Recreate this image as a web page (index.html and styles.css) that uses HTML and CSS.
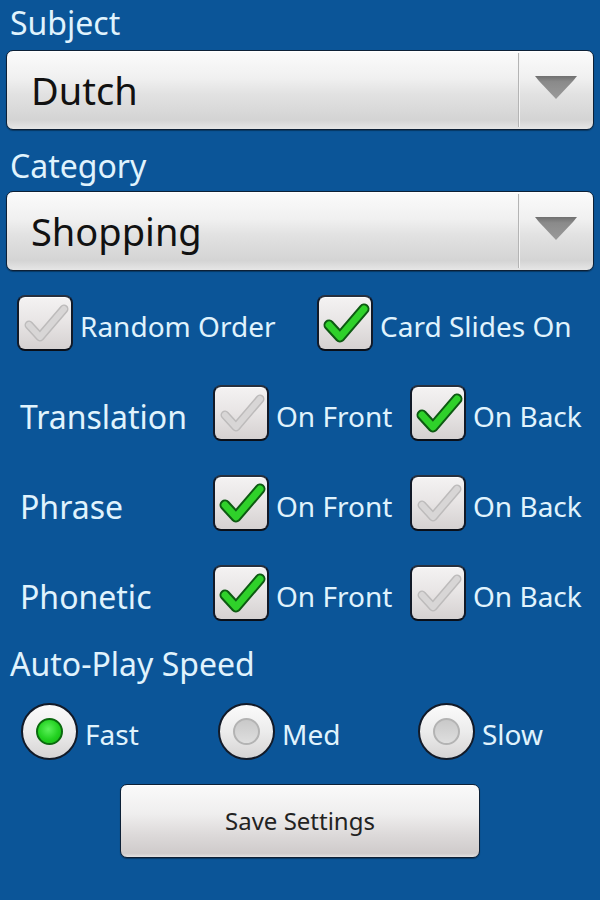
FILE: index.html
```html
<!DOCTYPE html>
<html lang="en">
<head>
<meta charset="utf-8">
<title>Settings</title>
<link rel="stylesheet" href="styles.css">
</head>
<body>
<div class="page">
  <div class="label label-first">Subject</div>
  <div class="spinner">
    <span class="spinner-text">Dutch</span>
    <span class="spinner-btn">
      <svg class="arrow" width="42" height="24" viewBox="0 0 42 24"><defs><linearGradient id="ag" x1="0" y1="0" x2="0" y2="1"><stop offset="0" stop-color="#6f6f6f"/><stop offset="0.25" stop-color="#8a8a8a"/><stop offset="1" stop-color="#9a9a9a"/></linearGradient></defs><polygon points="0,0 42,0 38,5 21,23 4,5" fill="url(#ag)"/></svg>
    </span>
  </div>
  <div class="label label-gap">Category</div>
  <div class="spinner">
    <span class="spinner-text">Shopping</span>
    <span class="spinner-btn">
      <svg class="arrow" width="42" height="24" viewBox="0 0 42 24"><polygon points="0,0 42,0 38,5 21,23 4,5" fill="url(#ag)"/></svg>
    </span>
  </div>

  <div class="row row-top">
    <div class="check-item">
      <span class="box"><svg width="56" height="56" viewBox="0 0 56 56"><path class="ck-off-o" d="M12 30 L23 42 L47 14"/><path class="ck-off" d="M12 30 L23 42 L47 14"/></svg></span>
      <span class="ctext">Random Order</span>
    </div>
    <div class="check-item">
      <span class="box"><svg width="56" height="56" viewBox="0 0 56 56"><path class="ck-on-o" d="M12 30 L23 42 L47 14"/><path class="ck-on" d="M12 30 L23 42 L47 14"/></svg></span>
      <span class="ctext">Card Slides On</span>
    </div>
  </div>

  <div class="row row-grid">
    <span class="rlabel">Translation</span>
    <div class="check-item">
      <span class="box"><svg width="56" height="56" viewBox="0 0 56 56"><path class="ck-off-o" d="M12 30 L23 42 L47 14"/><path class="ck-off" d="M12 30 L23 42 L47 14"/></svg></span>
      <span class="ctext">On Front</span>
    </div>
    <div class="check-item">
      <span class="box"><svg width="56" height="56" viewBox="0 0 56 56"><path class="ck-on-o" d="M12 30 L23 42 L47 14"/><path class="ck-on" d="M12 30 L23 42 L47 14"/></svg></span>
      <span class="ctext">On Back</span>
    </div>
  </div>

  <div class="row row-grid">
    <span class="rlabel">Phrase</span>
    <div class="check-item">
      <span class="box"><svg width="56" height="56" viewBox="0 0 56 56"><path class="ck-on-o" d="M12 30 L23 42 L47 14"/><path class="ck-on" d="M12 30 L23 42 L47 14"/></svg></span>
      <span class="ctext">On Front</span>
    </div>
    <div class="check-item">
      <span class="box"><svg width="56" height="56" viewBox="0 0 56 56"><path class="ck-off-o" d="M12 30 L23 42 L47 14"/><path class="ck-off" d="M12 30 L23 42 L47 14"/></svg></span>
      <span class="ctext">On Back</span>
    </div>
  </div>

  <div class="row row-grid">
    <span class="rlabel">Phonetic</span>
    <div class="check-item">
      <span class="box"><svg width="56" height="56" viewBox="0 0 56 56"><path class="ck-on-o" d="M12 30 L23 42 L47 14"/><path class="ck-on" d="M12 30 L23 42 L47 14"/></svg></span>
      <span class="ctext">On Front</span>
    </div>
    <div class="check-item">
      <span class="box"><svg width="56" height="56" viewBox="0 0 56 56"><path class="ck-off-o" d="M12 30 L23 42 L47 14"/><path class="ck-off" d="M12 30 L23 42 L47 14"/></svg></span>
      <span class="ctext">On Back</span>
    </div>
  </div>

  <div class="label label-speed">Auto-Play Speed</div>
  <div class="radios">
    <div class="radio-item">
      <span class="radio"><span class="dot dot-on"></span></span>
      <span class="ctext">Fast</span>
    </div>
    <div class="radio-item">
      <span class="radio"><span class="dot"></span></span>
      <span class="ctext">Med</span>
    </div>
    <div class="radio-item">
      <span class="radio"><span class="dot"></span></span>
      <span class="ctext">Slow</span>
    </div>
  </div>

  <div class="btn-wrap">
    <button class="save">Save Settings</button>
  </div>
</div>
</body>
</html>
```

FILE: styles.css
```css
html, body {
  margin: 0;
  padding: 0;
  background: #0b5598;
}
body {
  font-family: "Noto Sans", "Open Sans", "DejaVu Sans", sans-serif;
  color: #e0f3fd;
  width: 600px;
  height: 900px;
  overflow: hidden;
}
.page {
  padding: 0 6px;
}
.label {
  font-size: 32px;
  line-height: 40px;
  padding-left: 4px;
  box-sizing: border-box;
}
.label-first {
  height: 50px;
  padding-top: 3px;
}
.label-gap {
  height: 61px;
  padding-top: 16px;
}
.label-speed {
  height: 62px;
  padding-top: 6px;
}
.spinner {
  height: 80px;
  box-sizing: border-box;
  border: 1px solid #0d2036;
  border-radius: 7px;
  background: linear-gradient(#fbfbfb 0%, #f0f0f0 35%, #e2e2e2 55%, #d4d4d4 88%, #e6e6e6 100%);
  box-shadow: inset 0 1px 0 #ffffff, 0 1px 1px rgba(0,0,0,0.35);
  display: flex;
  align-items: stretch;
}
.spinner-text {
  flex: 1;
  font-size: 38px;
  line-height: 74px;
  color: #111;
  padding-left: 24px;
  border-right: 1px solid #b4b4b4;
  box-shadow: 1px 0 0 #f4f4f4;
  margin: 2px 0;
}
.spinner-btn {
  width: 74px;
  display: flex;
  align-items: center;
  justify-content: center;
  padding-bottom: 4px;
}
.arrow {
  display: block;
}
.row {
  height: 90px;
  display: grid;
  align-items: center;
}
.row-top {
  margin-top: 7px;
  padding-left: 11px;
  grid-template-columns: 300px 1fr;
}
.row-grid {
  padding-left: 14px;
  grid-template-columns: 193px 197px 1fr;
}
.rlabel {
  font-size: 32px;
  padding-top: 6px;
}
.check-item, .radio-item {
  display: flex;
  align-items: center;
  gap: 7px;
}
.ctext {
  font-size: 28px;
  padding-top: 6px;
  white-space: nowrap;
}
.box {
  width: 56px;
  height: 56px;
  box-sizing: border-box;
  border: 2px solid #121a28;
  border-top-color: #27303e;
  border-bottom-color: #0a0f18;
  border-radius: 8px;
  background: linear-gradient(#f4f2f2 0%, #e9e6e6 45%, #d5d1d1 100%);
  box-shadow: inset 0 1px 0 #ffffff;
  display: flex;
  align-items: center;
  justify-content: center;
  flex: none;
}
.box svg {
  display: block;
  margin: -2px;
}
.ck-on-o, .ck-on, .ck-off-o, .ck-off {
  fill: none;
  stroke-linecap: round;
  stroke-linejoin: round;
}
.ck-on-o {
  stroke: #0d5a12;
  stroke-width: 11;
}
.ck-on {
  stroke: #2fd12a;
  stroke-width: 7;
}
.ck-off-o {
  stroke: #bdbbbb;
  stroke-width: 9;
}
.ck-off {
  stroke: #d8d6d6;
  stroke-width: 6;
}
.radios {
  height: 62px;
  display: grid;
  grid-template-columns: 197px 200px 1fr;
  align-items: center;
  padding-left: 15px;
}
.radio {
  width: 57px;
  height: 57px;
  box-sizing: border-box;
  border-radius: 50%;
  border: 2px solid #121a28;
  background: linear-gradient(#fbfbfb 0%, #ececec 50%, #d6d4d4 100%);
  display: flex;
  align-items: center;
  justify-content: center;
  flex: none;
}
.dot {
  width: 27px;
  height: 27px;
  box-sizing: border-box;
  border-radius: 50%;
  border: 2px solid #b3b3b3;
  background: linear-gradient(#c9c9c9, #dedede);
}
.dot-on {
  border: 2px solid #0a6a0e;
  background: radial-gradient(circle at 45% 40%, #5cf25a 0%, #22d120 55%, #14b012 100%);
}
.btn-wrap {
  display: flex;
  justify-content: center;
  margin-top: 22px;
}
.save {
  width: 360px;
  height: 74px;
  box-sizing: border-box;
  border: 1px solid #0d2036;
  border-radius: 7px;
  background: linear-gradient(#fafafa 0%, #efeeee 40%, #dcd9d9 70%, #cfcbcb 95%, #e4e2e2 100%);
  box-shadow: inset 0 1px 0 #ffffff, 0 1px 1px rgba(0,0,0,0.35);
  font-family: "Noto Sans", "Open Sans", "DejaVu Sans", sans-serif;
  font-size: 24px;
  color: #222;
  padding: 0 0 2px 0;
}
```
